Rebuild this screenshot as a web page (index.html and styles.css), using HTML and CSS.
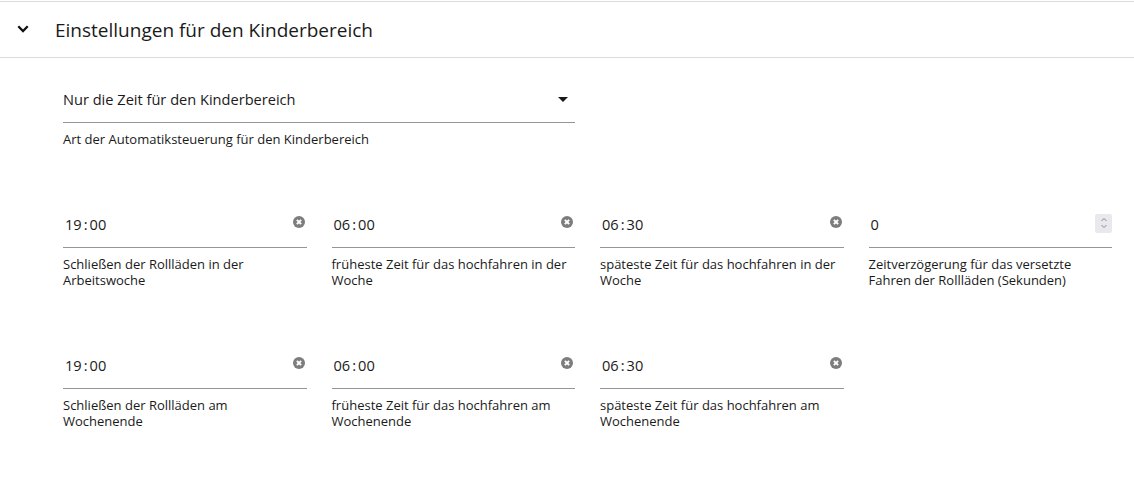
FILE: index.html
```html
<!DOCTYPE html>
<html lang="de">
<head>
    <meta charset="UTF-8">
    <meta name="viewport" content="width=device-width, initial-scale=1.0">
    <title>Einstellungen für den Kinderbereich</title>
    <link rel="stylesheet" href="styles.css">
</head>
<body>
    <div class="panel">
        <div class="panel-header">
            <svg class="chevron" width="12" height="8" viewBox="0 0 12 8">
                <path d="M1.3 1.3 L6 6 L10.7 1.3" fill="none" stroke="#111" stroke-width="2.3"/>
            </svg>
            <span class="panel-title">Einstellungen für den Kinderbereich</span>
        </div>

        <div class="panel-body">
            <div class="field select-field">
                <div class="input">
                    <span class="value">Nur die Zeit für den Kinderbereich</span>
                    <span class="caret"></span>
                </div>
                <div class="helper">Art der Automatiksteuerung für den Kinderbereich</div>
            </div>

            <div class="grid">
                <div class="field">
                    <div class="input">
                        <span class="value">19<span class="colon">:</span>00</span>
                        <span class="clear"></span>
                    </div>
                    <div class="helper">Schließen der Rollläden in der Arbeitswoche</div>
                </div>
                <div class="field">
                    <div class="input">
                        <span class="value">06<span class="colon">:</span>00</span>
                        <span class="clear"></span>
                    </div>
                    <div class="helper">früheste Zeit für das hochfahren in der Woche</div>
                </div>
                <div class="field">
                    <div class="input">
                        <span class="value">06<span class="colon">:</span>30</span>
                        <span class="clear"></span>
                    </div>
                    <div class="helper">späteste Zeit für das hochfahren in der Woche</div>
                </div>
                <div class="field">
                    <div class="input">
                        <span class="value">0</span>
                        <span class="spinner">
                            <svg width="8" height="12" viewBox="0 0 8 12">
                                <path d="M1.5 4 L4 1.5 L6.5 4 M1.5 8 L4 10.5 L6.5 8" fill="none" stroke="#8a8a8a" stroke-width="1"/>
                            </svg>
                        </span>
                    </div>
                    <div class="helper">Zeitverzögerung für das versetzte Fahren der Rollläden (Sekunden)</div>
                </div>

                <div class="field">
                    <div class="input">
                        <span class="value">19<span class="colon">:</span>00</span>
                        <span class="clear"></span>
                    </div>
                    <div class="helper">Schließen der Rollläden am Wochenende</div>
                </div>
                <div class="field">
                    <div class="input">
                        <span class="value">06<span class="colon">:</span>00</span>
                        <span class="clear"></span>
                    </div>
                    <div class="helper">früheste Zeit für das hochfahren am Wochenende</div>
                </div>
                <div class="field">
                    <div class="input">
                        <span class="value">06<span class="colon">:</span>30</span>
                        <span class="clear"></span>
                    </div>
                    <div class="helper">späteste Zeit für das hochfahren am Wochenende</div>
                </div>
            </div>
        </div>
    </div>
</body>
</html>
```

FILE: styles.css
```css
body {
    margin: 0;
    font-family: "Open Sans", "Noto Sans", sans-serif;
    color: #1a1a1a;
    background: #fff;
}

.panel {
    margin-top: 1px;
    border-top: 1px solid #dcdcdc;
}

.panel-header {
    height: 55px;
    display: flex;
    align-items: center;
    padding-left: 17px;
    border-bottom: 1px solid #dcdcdc;
}

.chevron {
    margin-right: 26px;
    margin-top: -2px;
}

.panel-title {
    font-size: 19px;
}

.panel-body {
    padding: 18px 22px 40px 63px;
    display: flex;
    flex-direction: column;
    gap: 54px;
}

.select-field {
    width: 512px;
}

.grid {
    display: grid;
    grid-template-columns: repeat(4, 1fr);
    column-gap: 25px;
    row-gap: 54px;
}

.input {
    height: 46px;
    display: flex;
    align-items: center;
    justify-content: space-between;
    border-bottom: 1px solid #959595;
}

.value {
    font-size: 14.6px;
}

.grid .value {
    padding-left: 2px;
}

.colon {
    margin: 0 2px;
}

.caret {
    width: 0;
    height: 0;
    border-left: 5px solid transparent;
    border-right: 5px solid transparent;
    border-top: 5px solid #1a1a1a;
    margin-right: 7px;
}

.clear {
    position: relative;
    width: 12px;
    height: 12px;
    border-radius: 50%;
    background: #7d7d7d;
    margin-right: 2px;
    margin-top: -4px;
}

.clear::before,
.clear::after {
    content: "";
    position: absolute;
    left: 5px;
    top: 3px;
    width: 2px;
    height: 6px;
    background: #fff;
    transform: rotate(45deg);
}

.clear::after {
    transform: rotate(-45deg);
}

.spinner {
    width: 17px;
    height: 19px;
    background: #e9e9ed;
    border-radius: 2px;
    display: flex;
    align-items: center;
    justify-content: center;
    margin-top: -2px;
}

.helper {
    margin-top: 8px;
    font-size: 13px;
    line-height: 16px;
}
```
